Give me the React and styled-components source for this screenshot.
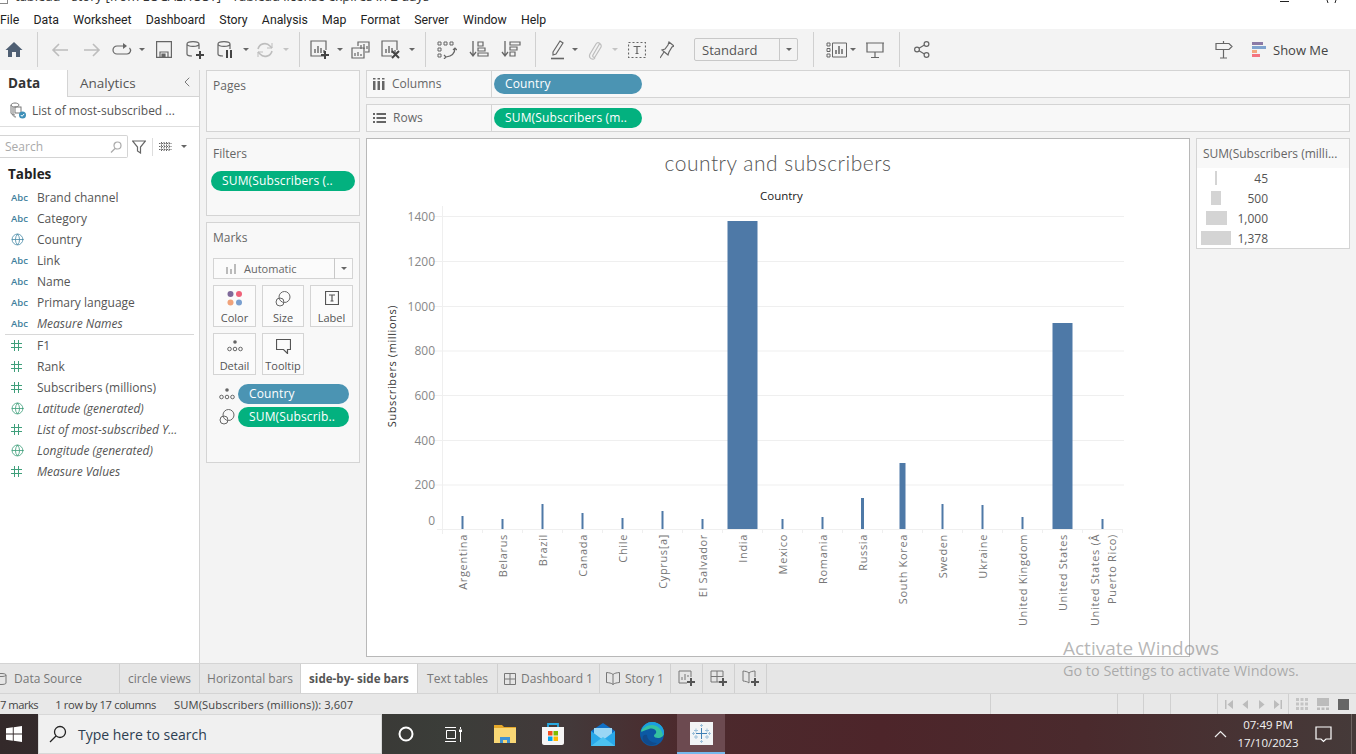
import React from 'react';
import styled, { createGlobalStyle } from 'styled-components';
import { ChevronLeft, Globe } from 'lucide-react';

const Global = createGlobalStyle`
    html, body { margin: 0; padding: 0; background: #fff; overflow: hidden; }
    * { box-sizing: border-box; }
    body { font-family: "Open Sans", "Liberation Sans", sans-serif; }
`;

const Screen = styled.div`
    position: relative;
    width: 1356px;
    height: 754px;
    display: flex;
    flex-direction: column;
    overflow: hidden;
    color: #555;
`;

const TitleBar = styled.div`
    height: 10px;
    flex: none;
    display: flex;
    align-items: flex-start;
    overflow: hidden;
    font-size: 13px;
    color: #333;
    background: #fff;
`;

const TitleIcon = styled.span`
    width: 8px;
    height: 4px;
    flex: none;
    border: 1px solid #888;
    border-top: none;
    border-left: none;
`;

const TitleText = styled.span`
    margin: -12px 0 0 7px;
    line-height: 16px;
    white-space: nowrap;
`;

const WindowBtns = styled.div`
    margin-left: auto;
    display: flex;
    padding-right: 19px;
`;

const MenuBar = styled.div`
    height: 19px;
    flex: none;
    display: flex;
    align-items: center;
    gap: 14.2px;
    background: #fff;
    font-family: Roboto, "Open Sans", sans-serif;
    font-size: 12.3px;
    color: #222;
`;

const Toolbar = styled.div`
    height: 41px;
    flex: none;
    display: flex;
    align-items: center;
    background: #f3f3f3;
    color: #666;
`;

const Tool = styled.div`
    width: ${({ $w }) => $w}px;
    margin-left: ${({ $ml }) => $ml || 0}px;
    flex: none;
    display: flex;
    align-items: center;
    justify-content: center;
    color: ${({ $off }) => ($off ? '#bdbdbd' : '#666')};
`;

const Caret = styled.span`
    width: 0;
    height: 0;
    flex: none;
    margin-left: ${({ $ml }) => ($ml || 0) + 1}px;
    margin-right: 1px;
    border-left: 3px solid transparent;
    border-right: 3px solid transparent;
    border-top: 3.5px solid ${({ $off }) => ($off ? '#c4c4c4' : '#666')};
`;

const Sep = styled.span`
    width: 1px;
    height: 35px;
    flex: none;
    margin-left: ${({ $ml }) => $ml}px;
    background: #d0d0d0;
`;

const StandardSelect = styled.div`
    width: 104px;
    height: 23px;
    margin-left: 19px;
    flex: none;
    display: flex;
    align-items: center;
    border: 1px solid #c8c8c8;
    border-radius: 2px;
    font-size: 13px;
    color: #555;
`;

const StandardLabel = styled.span`
    flex: 1;
    padding-left: 7px;
`;

const SelectArrow = styled.span`
    width: 18px;
    height: 21px;
    display: flex;
    align-items: center;
    justify-content: center;
    border-left: 1px solid #c8c8c8;
`;

const ShowMe = styled.div`
    flex: none;
    display: flex;
    align-items: center;
    gap: 6px;
    margin-left: 19px;
    font-size: 13px;
    color: #444;
    white-space: nowrap;
`;

const Main = styled.div`
    flex: 1;
    min-height: 0;
    display: flex;
    background: #f3f3f3;
`;

const Sidebar = styled.aside`
    width: 200px;
    flex: none;
    background: #fff;
    border-right: 1px solid #d4d4d4;
    display: flex;
    flex-direction: column;
`;

const SideTabs = styled.div`
    height: 27px;
    flex: none;
    display: flex;
`;

const DataTab = styled.div`
    width: 67px;
    padding: 4px 0 0 8px;
    font-size: 13.5px;
    font-weight: 700;
    color: #333;
`;

const AnalyticsTab = styled.div`
    flex: 1;
    display: flex;
    justify-content: space-between;
    padding: 4px 4px 0 12px;
    font-size: 13.5px;
    color: #555;
    background: #f3f3f3;
    border-left: 1px solid #d4d4d4;
    border-bottom: 1px solid #d4d4d4;
`;

const SourceRow = styled.div`
    height: 30px;
    flex: none;
    display: flex;
    align-items: center;
    gap: 6px;
    padding: 0 0 2px 10px;
    font-size: 12px;
    color: #555;
    border-bottom: 1px solid #dedede;
`;

const SearchRow = styled.div`
    height: 23px;
    margin-top: 8px;
    flex: none;
    display: flex;
    align-items: center;
`;

const SearchBox = styled.div`
    width: 128px;
    height: 23px;
    display: flex;
    align-items: center;
    justify-content: space-between;
    padding: 0 5px;
    font-size: 12px;
    color: #aaa;
    border: 1px solid #d4d4d4;
    border-left: none;
    border-radius: 0 2px 2px 0;
`;

const SearchTools = styled.div`
    display: flex;
    align-items: center;
    margin-left: 4px;
    color: #666;
`;

const SmallSep = styled.span`
    width: 1px;
    height: 18px;
    margin: 0 6px;
    background: #ddd;
`;

const TablesHead = styled.div`
    margin: 7px 0 3px 8px;
    font-size: 13.5px;
    line-height: 19px;
    font-weight: 700;
    color: #222;
`;

const FieldRow = styled.div`
    height: 21px;
    flex: none;
    display: flex;
    align-items: center;
    font-size: 12px;
    color: #555;
    font-style: ${({ $it }) => ($it ? 'italic' : 'normal')};
    white-space: nowrap;
`;

const FieldIcon = styled.span`
    width: 37px;
    padding-left: 11px;
    flex: none;
    display: flex;
    align-items: center;
    font-size: 9.5px;
    font-weight: 600;
    font-style: normal;
    color: #3f7f9d;
`;

const FieldDivider = styled.div`
    height: 1px;
    margin: 0 5px;
    background: #d8d8d8;
`;

const CardsCol = styled.div`
    width: 154px;
    margin-left: 6px;
    flex: none;
    display: flex;
    flex-direction: column;
    gap: 6px;
`;

const Card = styled.section`
    height: ${({ $h }) => $h}px;
    flex: none;
    padding: 7px 6px 0 6px;
    background: #f8f8f8;
    border: 1px solid #d4d4d4;
`;

const CardTitle = styled.div`
    font-size: 12px;
    line-height: 16px;
    color: #666;
    margin-bottom: ${({ $mb }) => $mb || 0}px;
`;

const Pill = styled.div`
    height: 20px;
    width: ${({ $w }) => ($w ? `${$w}px` : '100%')};
    flex: none;
    display: flex;
    align-items: center;
    padding: 0 0 1px 11px;
    border-radius: 10px;
    font-size: 12px;
    letter-spacing: 0.15px;
    color: #fff;
    white-space: nowrap;
    overflow: hidden;
    background: ${({ $kind }) => ($kind === 'dim' ? '#4b94b3' : '#03b17f')};
`;

const FilterPill = styled(Pill)`
    width: 144px;
    margin-left: -2px;
`;

const MarkSelect = styled.div`
    height: 21px;
    width: 140px;
    display: flex;
    align-items: center;
    background: #fbfbfb;
    border: 1px solid #d4d4d4;
    font-size: 11px;
    color: #666;
`;

const MarkSelectLabel = styled.span`
    flex: 1;
    display: flex;
    align-items: center;
    gap: 7px;
    padding-left: 12px;
`;

const MarkGrid = styled.div`
    margin-top: 6px;
    display: grid;
    grid-template-columns: 43px 42px 43px;
    grid-auto-rows: 42px;
    column-gap: 6px;
    row-gap: 6px;
`;

const MarkBtn = styled.div`
    display: flex;
    flex-direction: column;
    align-items: center;
    justify-content: space-between;
    padding: 5px 0 1px;
    background: #fbfbfb;
    border: 1px solid #d4d4d4;
    font-size: 11px;
    line-height: 15px;
    color: #555;
`;

const MarkPills = styled.div`
    margin-top: 9px;
    display: flex;
    flex-direction: column;
    gap: 3px;
`;

const MarkPillRow = styled.div`
    display: flex;
    align-items: center;
    gap: 3px;
    padding-left: 6px;
`;

const Work = styled.div`
    width: 984px;
    margin-left: 6px;
    flex: none;
    display: flex;
    flex-direction: column;
    gap: 6px;
`;

const Shelf = styled.div`
    height: 28px;
    flex: none;
    display: flex;
    align-items: center;
    background: #f8f8f8;
    border: 1px solid #d4d4d4;
`;

const ShelfLabel = styled.div`
    width: 125px;
    height: 100%;
    flex: none;
    display: flex;
    align-items: center;
    gap: 7px;
    padding: 0 0 1px 6px;
    margin-right: 2px;
    font-size: 12px;
    color: #666;
    border-right: 1px solid #d4d4d4;
`;

const Canvas = styled.div`
    flex: 1;
    min-height: 0;
    display: flex;
    gap: 6px;
    padding-bottom: 6px;
`;

const Sheet = styled.div`
    width: 824px;
    flex: none;
    display: flex;
    flex-direction: column;
    background: #fff;
    border: 1px solid #b8b8b8;
`;

const ChartTitle = styled.div`
    height: 49px;
    padding-top: 9px;
    flex: none;
    text-align: center;
    font-family: Lato, "Open Sans", sans-serif;
    font-size: 21px;
    line-height: 30px;
    font-weight: 300;
    letter-spacing: 0.5px;
    color: #555;
`;

const ColumnHead = styled.div`
    height: 18px;
    flex: none;
    padding-left: 393px;
    width: 100%;
    font-size: 11.5px;
    line-height: 16px;
    font-weight: 500;
    color: #222;
`;

const ChartSvg = styled.svg`
    display: block;
    flex: 1;
    min-height: 0;
    width: 100%;
    text { font-family: "Open Sans", sans-serif; }
`;

const Legend = styled.div`
    width: 154px;
    height: 111px;
    flex: none;
    background: #fff;
    border: 1px solid #d4d4d4;
`;

const LegendHead = styled.div`
    height: 29px;
    padding: 7px 0 0 6px;
    background: #f8f8f8;
    font-size: 12px;
    line-height: 16px;
    color: #666;
    white-space: nowrap;
`;

const LegendRow = styled.div`
    height: 20px;
    display: flex;
    align-items: center;
    font-size: 12px;
    color: #555;
`;

const SizeSlot = styled.div`
    width: 38px;
    flex: none;
    display: flex;
    justify-content: center;
`;

const SizeMark = styled.span`
    display: block;
    height: 14px;
    width: ${({ $w }) => $w}px;
    background: #d4d4d4;
`;

const LegendValue = styled.span`
    width: 33px;
    text-align: right;
`;

const TabBar = styled.div`
    height: 31px;
    flex: none;
    display: flex;
    background: #e6e6e6;
    border-top: 1px solid #d4d4d4;
    border-bottom: 1px solid #d4d4d4;
`;

const SheetTab = styled.div`
    width: ${({ $w }) => $w}px;
    flex: none;
    display: flex;
    align-items: center;
    justify-content: center;
    gap: 5px;
    font-size: ${({ $active }) => ($active ? '11.6px' : '12px')};
    font-weight: ${({ $active }) => ($active ? 700 : 400)};
    color: ${({ $active }) => ($active ? '#555' : '#777')};
    background: ${({ $active }) => ($active ? '#fff' : 'transparent')};
    border-right: 1px solid #d0d0d0;
    white-space: nowrap;
    overflow: hidden;
`;

const DataSourceTab = styled(SheetTab)`
    justify-content: flex-start;
    gap: 7px;
    margin-left: -5px;
`;

const StatusBar = styled.div`
    height: 20px;
    flex: none;
    display: flex;
    align-items: center;
    background: #e8e8e8;
    font-size: 11.2px;
    color: #444;
    white-space: nowrap;
`;

const StatusText = styled.span`
    margin-left: ${({ $ml }) => $ml}px;
    letter-spacing: ${({ $ls }) => $ls}px;
`;

const StatusRight = styled.div`
    margin-left: auto;
    height: 100%;
    display: flex;
    align-items: stretch;
`;

const StatusCell = styled.div`
    width: ${({ $w }) => $w}px;
    flex: none;
    display: flex;
    align-items: center;
    justify-content: center;
    gap: ${({ $gap }) => $gap || 0}px;
    border-left: 1px solid #d0d0d0;
`;

const Taskbar = styled.div`
    height: 40px;
    flex: none;
    display: flex;
    align-items: center;
    color: #fff;
    background: linear-gradient(90deg, #33292a 0, #3b3d39 33%, #43393a 42%, #4c2a2d 50%, #4d252a 65%, #4a2a2d 80%, #453a39 100%);
`;

const StartBtn = styled.div`
    width: 38px;
    height: 100%;
    flex: none;
    display: flex;
    align-items: center;
    padding-left: 6px;
`;

const TaskSearch = styled.div`
    width: 344px;
    height: 100%;
    flex: none;
    display: flex;
    align-items: center;
    gap: 11px;
    padding-left: 10px;
    background: #f0f0f0;
    border: 1px solid #d8d8d8;
    font-size: 14px;
    color: #2c3e50;
`;

const TaskSlot = styled.div`
    width: ${({ $w }) => $w || 48}px;
    margin-left: ${({ $ml }) => $ml || 0}px;
    height: 100%;
    flex: none;
    display: flex;
    align-items: center;
    justify-content: center;
    background: ${({ $active }) => ($active ? '#6c4a50' : 'transparent')};
    border-bottom: ${({ $active }) => ($active ? '2px solid #76b9ed' : 'none')};
`;

const TaskApps = styled.div`
    height: 100%;
    display: flex;
`;

const Tray = styled.div`
    margin-left: auto;
    height: 100%;
    display: flex;
    align-items: center;
`;

const Clock = styled.div`
    width: 62px;
    margin-left: 10px;
    text-align: center;
    font-size: 11.5px;
    line-height: 18px;
    color: #f2f2f2;
    white-space: nowrap;
`;

const DesktopEdge = styled.span`
    width: 1px;
    height: 100%;
    margin: 0 4px;
    background: #6d6361;
`;

const Watermark = styled.div`
    position: absolute;
    left: 1063px;
    top: 637px;
    color: rgba(110, 110, 110, 0.5);
    pointer-events: none;
    white-space: nowrap;
`;

const WatermarkBig = styled.div`
    font-size: 19px;
    line-height: 23px;
`;

const WatermarkSmall = styled.div`
    margin-top: 1px;
    font-size: 14.4px;
    line-height: 20px;
`;

const Ic = ({ w = 20, h = 20, sw = 1.2, children }) => (
    <svg width={w} height={h} viewBox={`0 0 ${w} ${h}`} fill="none" stroke="currentColor" strokeWidth={sw}>
        {children}
    </svg>
);

const Plus = ({ x, y }) => (
    <path d={`M${x - 4} ${y}h8M${x} ${y - 4}v8`} stroke="#444" strokeWidth="2" />
);

const BarsIn = () => <path d="M5 13V9M8 13V6M11 13V8M14 13V10" strokeWidth="1.4" />;

const HomeIcon = () => (
    <svg width="18" height="17" viewBox="0 0 18 17"><path d="M9 1 0.5 9H3v7h4v-5h4v5h4V9h2.5z" fill="#4f5f73" /></svg>
);

const BackIcon = () => <Ic w={18} h={16} sw={1.6}><path d="M17 8H2M8 2 2 8l6 6" /></Ic>;
const ForwardIcon = () => <Ic w={18} h={16} sw={1.6}><path d="M1 8h15M10 2l6 6-6 6" /></Ic>;
const RedoIcon = () => <Ic w={20} h={16}><path d="M13 4H5a3.5 3.5 0 0 0 0 8h10a3.5 3.5 0 0 0 2.5-6" /><path d="M11 1l4 3-4 3" fill="currentColor" stroke="none" /></Ic>;
const SaveIcon = () => <Ic w={16} h={17}><path d="M.6.6h14.8v15.8H.6z" /><path d="M4 16v-5h8v5" /><path d="M6 16v-3h3v3z" fill="currentColor" /></Ic>;
const DbBase = () => <path d="M2 4v10c0 1.3 2.2 2 5 2M14 4v5M2 4c0-1.5 2.5-2.4 6-2.4S14 2.5 14 4 11.5 6.4 8 6.4 2 5.5 2 4z" />;
const AddDataIcon = () => <Ic w={20} h={20}><DbBase /><Plus x={15} y={15} /></Ic>;
const PauseDataIcon = () => <Ic w={20} h={20}><DbBase /><path d="M11 10v8M15 10v8" stroke="#444" strokeWidth="2" /></Ic>;
const RefreshIcon = () => <Ic w={18} h={18} sw={1.6}><path d="M2 8a7 7 0 0 1 12-3l2 2M16 10a7 7 0 0 1-12 3l-2-2" /><path d="M16 2v5h-5M2 16v-5h5" strokeWidth="1" /></Ic>;
const NewSheetIcon = () => <Ic w={20} h={20}><path d="M14 16H1V1h15v9" /><BarsIn /><Plus x={15} y={15} /></Ic>;
const DupIcon = () => <Ic w={20} h={18}><path d="M7 5V1h11v10h-4" /><path d="M1 7h12v10H1z" /><path d="M10 8V4M13 8V3M16 8V5M4 15v-3M7 15v-4M10 15v-2" /></Ic>;
const ClearIcon = () => <Ic w={20} h={20}><path d="M11 16H1V1h15v9" /><BarsIn /><path d="M11 11l7 7M18 11l-7 7" stroke="#444" strokeWidth="2" /></Ic>;
const SwapIcon = () => <Ic w={20} h={18}><path d="M1 1h3v3H1zM7 1h3v3H7zM13 1h3v3h-3zM1 7h3v3H1zM1 13h3v3H1z" strokeWidth="1" /><path d="M18 7c0 4-2 8-9 9M7 14l2 2-2 2M16 9l2-2 2 2" /></Ic>;
const SortAscIcon = () => <Ic w={20} h={17}><path d="M4 0v15M1 11l3 4 3-4" strokeWidth="1.3" /><path d="M9 1h5v4H9zM9 7h7v3H9zM9 12h10v3H9z" /></Ic>;
const SortDescIcon = () => <Ic w={20} h={17}><path d="M4 0v15M1 11l3 4 3-4" strokeWidth="1.3" /><path d="M9 1h10v3H9zM9 6h7v3H9zM9 11h5v4H9z" /></Ic>;
const PenIcon = () => <Ic w={14} h={21}><path d="M2 13 9 2l3 2-7 11-3 1z" /><path d="M0 19.5h13" strokeWidth="1.6" /></Ic>;
const ClipIcon = () => <Ic w={14} h={20}><path d="M12 3 5 15c-1 2 1 3 2 2l6-10c1-3-3-6-5-3L2 14c-2 4 3 7 5 4" /></Ic>;
const TextBoxIcon = () => <Ic w={18} h={16}><path d="M.5.5h17v15H.5z" strokeDasharray="2 2" /><path d="M5.5 4.5h7M9 4.5v7M7.5 11.5h3" /></Ic>;
const PinIcon = () => <Ic w={14} h={18}><path d="M9 1l5 4-2 1-3 5-1 3-6-5 3-1 3-4z" /><path d="M4 11 0 17" /></Ic>;
const FitIcon = () => <Ic w={21} h={16}><path d="M1 1h3v3H1zM1 6.5h3v3H1zM1 12h3v3H1zM6.5 1h14v14h-14z" strokeWidth="1" /><path d="M10 12V8M13 12V4M16 12V7" strokeWidth="1.5" /></Ic>;
const PresentIcon = () => <Ic w={18} h={16}><path d="M0 1h18M1 1v9h16V1M9 10v5M5 15.5h8" /></Ic>;
const ShareIcon = () => <Ic w={16} h={17}><circle cx="3" cy="8.5" r="2.4" /><circle cx="12.5" cy="3" r="2.4" /><circle cx="12.5" cy="14" r="2.4" /><path d="M5 7.3l5.4-3.2M5 9.7l5.4 3.2" /></Ic>;
const SignIcon = () => <Ic w={18} h={18}><path d="M1 2.5h13l3 3-3 3H1zM8.5 0v2.5M8.5 8.5V17M5 17h7" /></Ic>;
const ShowMeIcon = () => (
    <svg width="15" height="15" viewBox="0 0 15 15">
        <path d="M0 0h11v3H0z" fill="#8b7aa6" /><path d="M0 4h14v3H0z" fill="#7fa3cf" />
        <path d="M0 8h5v3H0z" fill="#f3a77d" /><path d="M0 12h8v3H0z" fill="#f3737f" />
    </svg>
);

const DatasetIcon = () => (
    <svg width="16" height="17" viewBox="0 0 16 17" fill="none" stroke="#777">
        <path d="M1 3c0-1 2-2 4-2s4 1 4 2-2 2-4 2-4-1-4-2zM1 3v8c0 1 2 2 4 2M3 5v8c0 1 1 2 3 2" />
        <rect x="5" y="5" width="6" height="6" /><circle cx="12.5" cy="13" r="3.5" fill="#3d8fb8" stroke="none" />
        <path d="M10.8 13l1.2 1.3 2.2-2.4" stroke="#fff" />
    </svg>
);

const SearchGlass = () => <Ic w={12} h={12}><circle cx="7.5" cy="4.5" r="3.5" /><path d="M5 7.5 1 11.5" /></Ic>;
const FunnelIcon = () => <Ic w={14} h={14}><path d="M.5 1h13L8.5 7v6l-3-2V7z" /></Ic>;
const ListIcon = () => <Ic w={13} h={10} sw={1}><path d="M0 1.5h13M0 4.5h13M0 7.5h13M2.5 0v10M5 0v10M7.5 0v10M10 0v10" strokeDasharray="1.5 1" /></Ic>;
const HashIcon = () => <svg width="11" height="11" viewBox="0 0 11 11" fill="none" stroke="#3f9f7b"><path d="M3.5 0v11M7.5 0v11M0 3.5h11M0 7.5h11" /></svg>;

const SmallBars = () => <svg width="11" height="10" viewBox="0 0 11 10"><path d="M0 3h2v7H0zM4 5h2v5H4zM8 0h2v10H8z" fill="#bbb" /></svg>;
const DotsIcon = () => <svg width="16" height="14" viewBox="0 0 16 14" fill="none" stroke="#666"><circle cx="8" cy="3" r="1.8" fill="#666" stroke="none" /><circle cx="2.5" cy="10" r="1.8" /><circle cx="8" cy="10" r="1.8" /><circle cx="13.5" cy="10" r="1.8" /></svg>;
const SizeIcon = () => <svg width="16" height="16" viewBox="0 0 16 16" fill="none" stroke="#666"><circle cx="9.5" cy="6" r="5.5" /><circle cx="5" cy="11" r="4" /></svg>;
const LabelIcon = () => <Ic w={14} h={14}><path d="M.5.5h13v13H.5zM4 4h6M7 4v6M5.5 10h3" /></Ic>;
const TipIcon = () => <Ic w={15} h={15}><path d="M.5.5h14v10h-3v4l-4-4H.5z" /></Ic>;
const ColorDots = () => (
    <svg width="16" height="16" viewBox="0 0 16 16">
        <circle cx="3.5" cy="3" r="3" fill="#7f6a9a" /><circle cx="12" cy="3" r="3" fill="#ef6179" />
        <circle cx="3.5" cy="11.5" r="3" fill="#f0a27a" /><circle cx="12" cy="11.5" r="3" fill="#7a9fcf" />
    </svg>
);

const ColumnsIcon = () => <svg width="12" height="12" viewBox="0 0 12 12"><path d="M0 3h2.5v9H0zM4.5 3H7v9H4.5zM9 3h2.5v9H9zM0 0h2.5v1.5H0zM4.5 0H7v1.5H4.5zM9 0h2.5v1.5H9z" fill="#666" /></svg>;
const RowsIcon = () => <svg width="13" height="10" viewBox="0 0 13 10"><path d="M0 0h2v2H0zM0 4h2v2H0zM0 8h2v2H0zM3.5 0H13v2H3.5zM3.5 4H13v2H3.5zM3.5 8H13v2H3.5z" fill="#666" /></svg>;

const DashIcon = () => <Ic w={12} h={12} sw={1}><path d="M.5.5h11v11H.5zM.5 6h11M6 .5v11" /></Ic>;
const BookIcon = () => <Ic w={14} h={13} sw={1}><path d="M7 2.5C5.5 1 3 .8.5.5v10c2.5.3 5 .5 6.5 2 1.5-1.5 4-1.7 6.5-2V.5C11 .8 8.5 1 7 2.5zM7 2.5v10" /></Ic>;
const DbTabIcon = () => <Ic w={12} h={13} sw={1}><path d="M1 3v8c0 1 2 1.5 5 1.5s5-.5 5-1.5V3M1 3c0-1 2-1.5 5-1.5s5 .5 5 1.5-2 1.5-5 1.5S1 4 1 3z" /></Ic>;
const NewTabPlus = () => <path d="M13 8v8M9 12h8" stroke="#555" strokeWidth="2" />;

const NavIcon = ({ d }) => <svg width="9" height="9" viewBox="0 0 9 9"><path d={d} fill="#bcbcbc" /></svg>;

const WinLogo = () => (
    <svg width="16" height="16" viewBox="0 0 16 16"><path d="M0 2.3 6.8 1.3v6.3H0zM7.7 1.2 16 0v7.6H7.7zM0 8.4h6.8v6.3L0 13.7zM7.7 8.4H16V16l-8.3-1.2z" fill="#fff" /></svg>
);
const TaskGlass = () => <svg width="18" height="18" viewBox="0 0 18 18" fill="none" stroke="#222" strokeWidth="1.3"><circle cx="11" cy="7" r="5.5" /><path d="M7 11 1 17" /></svg>;
const Cortana = () => <svg width="16" height="16" viewBox="0 0 16 16" fill="none" stroke="#fff" strokeWidth="2"><circle cx="8" cy="8" r="6.5" /></svg>;
const TaskView = () => <svg width="17" height="15" viewBox="0 0 17 15" fill="none" stroke="#fff"><path d="M0 .5h11M0 14.5h11M1.5 3.5h9v8h-9zM15.5 0v2M15.5 5v10" /><rect x="14" y="2.5" width="3" height="2.5" fill="#fff" stroke="none" /></svg>;
const Explorer = () => (
    <svg width="22" height="18" viewBox="0 0 22 18">
        <path d="M0 0h8l2 2h12v3H0z" fill="#e5a82a" /><path d="M0 3h22v15H0z" fill="#f8d775" />
        <path d="M6 18v-6h10v6h-3v-3H9v3z" fill="#3f93d3" />
    </svg>
);
const Store = () => (
    <svg width="24" height="24" viewBox="0 0 24 24">
        <path d="M7 6V2h10v4" fill="none" stroke="#27a9e1" strokeWidth="1.8" />
        <path d="M1 5h22v16c0 1-1 2-2 2H3c-1 0-2-1-2-2z" fill="#f5f5f5" />
        <path d="M7 9h4.5v4.5H7z" fill="#f25022" /><path d="M12.5 9H17v4.5h-4.5z" fill="#7fba00" />
        <path d="M7 14.5h4.5V19H7z" fill="#00a4ef" /><path d="M12.5 14.5H17V19h-4.5z" fill="#ffb900" />
    </svg>
);
const Mail = () => (
    <svg width="24" height="23" viewBox="0 0 24 23">
        <path d="M12 0 24 8v15H0V8z" fill="#0f6fc6" /><path d="M3 5h18v10l-9 5-9-5z" fill="#9ad6f5" />
        <path d="M0 8l12 9 12-9v15H0z" fill="#29a8ea" /><path d="M0 23l12-9 12 9z" fill="#4cc2f1" />
    </svg>
);
const Edge = () => (
    <svg width="24" height="24" viewBox="0 0 24 24">
        <circle cx="12" cy="12" r="12" fill="#0c59a4" />
        <path d="M1 9C3 3 8 0 12 0c7 0 12 5 12 11 0 3-3 5-6 5-2 0-4-1-4-2 0-2 3-2 2-5-1-2-4-3-7-2C5 8 1 11 1 9z" fill="#35c1a0" />
        <path d="M12 0c7 0 12 5 12 11 0 1-.5 2-1 2.5C22 7 17 3 12 3 7 3 3 6 1 9 3 3 8 0 12 0z" fill="#1b9de2" />
        <path d="M7 13c0 5 5 8 10 8-4 4-12 2-14-3-1-3 0-6 4-5z" fill="#114a8b" />
    </svg>
);
const TableauTile = () => (
    <svg width="23" height="23" viewBox="0 0 23 23">
        <rect width="23" height="23" fill="#f2f4f6" />
        <path d="M11.5 6v11M6 11.5h11" stroke="#3f7fb5" />
        <path d="M6 6.5v4M4 8.5h4M17 6.5v4M15 8.5h4M6 13v4M4 15h4M17 13v4M15 15h4M11.5 2v3M10 3.5h3M11.5 18v3M10 19.5h3M2 11.5h3M3.5 10v3M18 11.5h3M19.5 10v3" stroke="#9dc0da" />
    </svg>
);
const Chevron = () => <svg width="13" height="8" viewBox="0 0 13 8" fill="none" stroke="#eee" strokeWidth="1.2"><path d="M1 7l5.5-5.5L12 7" /></svg>;
const Notify = () => <svg width="17" height="17" viewBox="0 0 17 17" fill="none" stroke="#fff" strokeWidth="1.2"><path d="M1 1h15v12h-5l-2.5 2.5L6 13H1z" /></svg>;

const MENU = ['File', 'Data', 'Worksheet', 'Dashboard', 'Story', 'Analysis', 'Map', 'Format', 'Server', 'Window', 'Help'];

const FIELDS = [
    ['abc', 'Brand channel'], ['abc', 'Category'], ['geo', 'Country'], ['abc', 'Link'], ['abc', 'Name'],
    ['abc', 'Primary language'], ['abc', 'Measure Names', true], 'divider',
    ['num', 'F1'], ['num', 'Rank'], ['num', 'Subscribers (millions)'], ['geo2', 'Latitude (generated)', true],
    ['num', 'List of most-subscribed Y...', true], ['geo2', 'Longitude (generated)', true], ['num', 'Measure Values', true],
];

const BARS = [
    ['Argentina', 516, 2], ['Belarus', 519, 2], ['Brazil', 504, 2], ['Canada', 513, 2], ['Chile', 518, 2],
    ['Cyprus[a]', 511, 2], ['El Salvador', 519, 2], ['India', 221, 30], ['Mexico', 519, 2], ['Romania', 517, 2],
    ['Russia', 498, 3], ['South Korea', 463, 6], ['Sweden', 504, 2], ['Ukraine', 505, 2], ['United Kingdom', 517, 2],
    ['United States', 323, 20], [['United States (Â', 'Puerto Rico)'], 519, 2],
];

const TICKS = [[1400, 216.5], [1200, 261.5], [1000, 306.5], [800, 351], [600, 395.5], [400, 440.5], [200, 485]];

// chart coordinates are the ones measured on the page, hence the viewBox offset
const Chart = () => (
    <ChartSvg viewBox="367 206 822 450">
        <path d="M442.5 206V534" stroke="#efefef" />
        {TICKS.map(([v, y]) => (
            <g key={v}>
                <path d={`M432 ${y}H1124`} stroke="#efefef" />
                <text x="435" y={y + 4} textAnchor="end" fontSize="12" fill="#888">{v}</text>
            </g>
        ))}
        <text x="435" y="525" textAnchor="end" fontSize="12" fill="#888">0</text>
        <path d="M437 529.5H1123" stroke="#efefef" />
        <text transform="translate(396 366) rotate(-90)" textAnchor="middle" fontSize="11" letterSpacing="0.6" fill="#333">Subscribers (millions)</text>
        {BARS.map(([name, top, w], i) => {
            const cx = 462.5 + i * 40;
            return (
                <g key={i}>
                    <path d={`M${442.5 + i * 40} 529.5V533`} stroke="#efefef" />
                    <rect x={cx - w / 2} y={top} width={w} height={529 - top} fill="#4e79a7" />
                    {Array.isArray(name) ? (
                        <>
                            <text transform={`translate(${cx - 4} 534) rotate(-90)`} textAnchor="end" fontSize="11" letterSpacing="0.65" fill="#777">{name[0]}</text>
                            <text transform={`translate(${cx + 13} 534) rotate(-90)`} textAnchor="end" fontSize="11" letterSpacing="0.65" fill="#777">{name[1]}</text>
                        </>
                    ) : (
                        <text transform={`translate(${cx + 4} 534) rotate(-90)`} textAnchor="end" fontSize="11" letterSpacing="0.65" fill="#777">{name}</text>
                    )}
                </g>
            );
        })}
        <path d="M1122.5 529.5V533" stroke="#efefef" />
    </ChartSvg>
);

const fieldIcon = (kind) => {
    if (kind === 'abc') return <FieldIcon>Abc</FieldIcon>;
    if (kind === 'num') return <FieldIcon><HashIcon /></FieldIcon>;
    return <FieldIcon><Globe size={13} strokeWidth={1.5} color={kind === 'geo' ? '#4a8ba8' : '#3f9f7b'} /></FieldIcon>;
};

export default function App() {
    return (
        <Screen>
            <Global />
            <TitleBar>
                <TitleIcon />
                <TitleText>tableau - story [from LOCALHOST] - Tableau license expires in 2 days</TitleText>
                <WindowBtns>
                    <svg width="57" height="4" viewBox="0 0 57 4" fill="none" stroke="#222"><path d="M0 1.5h9M47 0l1 3M56 0l-1 3" /></svg>
                </WindowBtns>
            </TitleBar>
            <MenuBar>
                {MENU.map((m) => <span key={m}>{m}</span>)}
            </MenuBar>
            <Toolbar>
                <Tool $w={28}><HomeIcon /></Tool>
                <Sep $ml={9} />
                <Tool $w={20} $ml={12} $off><BackIcon /></Tool>
                <Tool $w={20} $ml={12} $off><ForwardIcon /></Tool>
                <Tool $w={20} $ml={10}><RedoIcon /></Tool>
                <Caret $ml={6} />
                <Tool $w={16} $ml={10}><SaveIcon /></Tool>
                <Tool $w={20} $ml={13}><AddDataIcon /></Tool>
                <Tool $w={20} $ml={11}><PauseDataIcon /></Tool>
                <Caret $ml={6} />
                <Tool $w={18} $ml={6} $off><RefreshIcon /></Tool>
                <Caret $ml={8} $off />
                <Sep $ml={9} />
                <Tool $w={20} $ml={10}><NewSheetIcon /></Tool>
                <Caret $ml={6} />
                <Tool $w={20} $ml={7}><DupIcon /></Tool>
                <Tool $w={20} $ml={10}><ClearIcon /></Tool>
                <Caret $ml={7} />
                <Sep $ml={9} />
                <Tool $w={20} $ml={11}><SwapIcon /></Tool>
                <Tool $w={20} $ml={12}><SortAscIcon /></Tool>
                <Tool $w={20} $ml={12}><SortDescIcon /></Tool>
                <Sep $ml={14} />
                <Tool $w={18} $ml={13}><PenIcon /></Tool>
                <Caret $ml={4} />
                <Tool $w={16} $ml={8} $off><ClipIcon /></Tool>
                <Caret $ml={8} $off />
                <Tool $w={18} $ml={9}><TextBoxIcon /></Tool>
                <Tool $w={16} $ml={13}><PinIcon /></Tool>
                <StandardSelect>
                    <StandardLabel>Standard</StandardLabel>
                    <SelectArrow><Caret /></SelectArrow>
                </StandardSelect>
                <Sep $ml={15} />
                <Tool $w={22} $ml={11}><FitIcon /></Tool>
                <Caret $ml={2} />
                <Tool $w={18} $ml={9}><PresentIcon /></Tool>
                <Sep $ml={15} />
                <Tool $w={16} $ml={14}><ShareIcon /></Tool>
                <Tool $w={18} $ml={285}><SignIcon /></Tool>
                <ShowMe><ShowMeIcon />Show Me</ShowMe>
            </Toolbar>
            <Main>
                <Sidebar>
                    <SideTabs>
                        <DataTab>Data</DataTab>
                        <AnalyticsTab>Analytics<ChevronLeft size={16} strokeWidth={1.3} color="#666" /></AnalyticsTab>
                    </SideTabs>
                    <SourceRow><DatasetIcon />List of most-subscribed ...</SourceRow>
                    <SearchRow>
                        <SearchBox>Search<SearchGlass /></SearchBox>
                        <SearchTools>
                            <FunnelIcon />
                            <SmallSep />
                            <ListIcon />
                            <Caret $ml={8} />
                        </SearchTools>
                    </SearchRow>
                    <TablesHead>Tables</TablesHead>
                    {FIELDS.map((f, i) => (f === 'divider'
                        ? <FieldDivider key={i} />
                        : <FieldRow key={i} $it={f[2]}>{fieldIcon(f[0])}{f[1]}</FieldRow>))}
                </Sidebar>
                <CardsCol>
                    <Card $h={62}><CardTitle>Pages</CardTitle></Card>
                    <Card $h={78}>
                        <CardTitle $mb={9}>Filters</CardTitle>
                        <FilterPill>SUM(Subscribers (..</FilterPill>
                    </Card>
                    <Card $h={241}>
                        <CardTitle $mb={12}>Marks</CardTitle>
                        <MarkSelect>
                            <MarkSelectLabel><SmallBars />Automatic</MarkSelectLabel>
                            <SelectArrow><Caret /></SelectArrow>
                        </MarkSelect>
                        <MarkGrid>
                            <MarkBtn><ColorDots />Color</MarkBtn>
                            <MarkBtn><SizeIcon />Size</MarkBtn>
                            <MarkBtn><LabelIcon />Label</MarkBtn>
                            <MarkBtn><DotsIcon />Detail</MarkBtn>
                            <MarkBtn><TipIcon />Tooltip</MarkBtn>
                        </MarkGrid>
                        <MarkPills>
                            <MarkPillRow><DotsIcon /><Pill $kind="dim" $w={111}>Country</Pill></MarkPillRow>
                            <MarkPillRow><SizeIcon /><Pill $w={111}>SUM(Subscrib..</Pill></MarkPillRow>
                        </MarkPills>
                    </Card>
                </CardsCol>
                <Work>
                    <Shelf>
                        <ShelfLabel><ColumnsIcon />Columns</ShelfLabel>
                        <Pill $kind="dim" $w={148}>Country</Pill>
                    </Shelf>
                    <Shelf>
                        <ShelfLabel><RowsIcon />Rows</ShelfLabel>
                        <Pill $w={148}>SUM(Subscribers (m..</Pill>
                    </Shelf>
                    <Canvas>
                        <Sheet>
                            <ChartTitle>country and subscribers</ChartTitle>
                            <ColumnHead>Country</ColumnHead>
                            <Chart />
                        </Sheet>
                        <Legend>
                            <LegendHead>SUM(Subscribers (milli...</LegendHead>
                            {[[2, '45'], [10, '500'], [21, '1,000'], [30, '1,378']].map(([w, v]) => (
                                <LegendRow key={v}><SizeSlot><SizeMark $w={w} /></SizeSlot><LegendValue>{v}</LegendValue></LegendRow>
                            ))}
                        </Legend>
                    </Canvas>
                </Work>
            </Main>
            <TabBar>
                <DataSourceTab $w={125}><DbTabIcon />Data Source</DataSourceTab>
                <SheetTab $w={80}>circle views</SheetTab>
                <SheetTab $w={101}>Horizontal bars</SheetTab>
                <SheetTab $w={117} $active>side-by- side bars</SheetTab>
                <SheetTab $w={80}>Text tables</SheetTab>
                <SheetTab $w={102}><DashIcon />Dashboard 1</SheetTab>
                <SheetTab $w={71}><BookIcon />Story 1</SheetTab>
                <SheetTab $w={32}><Ic w={18} h={17} sw={1}><path d="M9 13H1V1h12v6M4 10V7M7 10V4M10 7V5" /><NewTabPlus /></Ic></SheetTab>
                <SheetTab $w={32}><Ic w={18} h={17} sw={1}><path d="M9 12H1V1h12v6M1 6.5h12M7 1v11" /><NewTabPlus /></Ic></SheetTab>
                <SheetTab $w={32}><Ic w={18} h={17} sw={1}><path d="M7 3C5.5 1.5 3 1.3 1 1v10c2 .3 4.5.5 6 2M7 3c1.5-1.5 3.5-1.7 6-2v6M7 3v10" /><NewTabPlus /></Ic></SheetTab>
            </TabBar>
            <StatusBar>
                <StatusText $ml={0} $ls={-0.5}>7 marks</StatusText>
                <StatusText $ml={17} $ls={-0.35}>1 row by 17 columns</StatusText>
                <StatusText $ml={18} $ls={0.08}>SUM(Subscribers (millions)): 3,607</StatusText>
                <StatusRight>
                    <StatusCell $w={127} />
                    <StatusCell $w={26} />
                    <StatusCell $w={27} />
                    <StatusCell $w={47} />
                    <StatusCell $w={71} $gap={7}>
                        <NavIcon d="M0 0h1.5v9H0zM8 0v9L2.5 4.5z" />
                        <NavIcon d="M7 0v9L1.5 4.5z" />
                        <NavIcon d="M2 0v9l5.5-4.5z" />
                        <NavIcon d="M7.5 0H9v9H7.5zM1 0v9l5.5-4.5z" />
                    </StatusCell>
                    <StatusCell $w={68} $gap={9}>
                        <svg width="12" height="12" viewBox="0 0 12 12" fill="#c4c4c4"><path d="M0 0h3v3H0zM4.5 0h3v3h-3zM9 0h3v3H9zM0 4.5h3v3H0zM4.5 4.5h3v3h-3zM9 4.5h3v3H9zM0 9h3v3H0zM4.5 9h3v3h-3zM9 9h3v3H9z" /></svg>
                        <svg width="12" height="12" viewBox="0 0 12 12" fill="#bcbcbc"><path d="M0 0h12v8H0zM0 9.5h3V12H0zM4.5 9.5h3V12h-3zM9 9.5h3V12H9z" /></svg>
                        <svg width="11" height="11" viewBox="0 0 11 11" fill="#666"><path d="M0 0h11v11H0z" /></svg>
                    </StatusCell>
                </StatusRight>
            </StatusBar>
            <Taskbar>
                <StartBtn><WinLogo /></StartBtn>
                <TaskSearch><TaskGlass />Type here to search</TaskSearch>
                <TaskApps>
                    <TaskSlot><Cortana /></TaskSlot>
                    <TaskSlot $w={46}><TaskView /></TaskSlot>
                    <TaskSlot $w={58}><Explorer /></TaskSlot>
                    <TaskSlot $w={38}><Store /></TaskSlot>
                    <TaskSlot $w={62}><Mail /></TaskSlot>
                    <TaskSlot $w={36}><Edge /></TaskSlot>
                    <TaskSlot $ml={7} $active><TableauTile /></TaskSlot>
                </TaskApps>
                <Tray>
                    <Chevron />
                    <Clock>07:49 PM<br />17/10/2023</Clock>
                    <TaskSlot><Notify /></TaskSlot>
                    <DesktopEdge />
                </Tray>
            </Taskbar>
            <Watermark>
                <WatermarkBig>Activate Windows</WatermarkBig>
                <WatermarkSmall>Go to Settings to activate Windows.</WatermarkSmall>
            </Watermark>
        </Screen>
    );
}
